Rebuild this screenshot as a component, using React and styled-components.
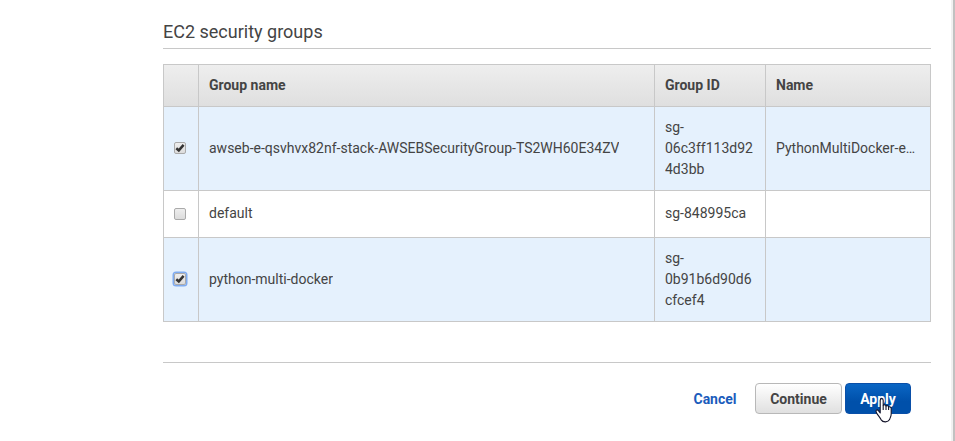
import React from "react";
import styled, { createGlobalStyle } from "styled-components";

const GlobalStyle = createGlobalStyle`
  *, *::before, *::after { box-sizing: border-box; }
  body {
    margin: 0;
    overflow: hidden;
    background: #fff;
    color: #444;
    font: 14px/21px Roboto, "Liberation Sans", sans-serif;
  }
`;

const Page = styled.div`
  display: flex;
  justify-content: space-between;
  height: 441px;
  padding-left: 163px;
`;

const Content = styled.main`
  width: 768px;
  padding-top: 20px;
`;

const ScrollEdge = styled.div`
  width: 4px;
  background: #c1c1c1;
  border-left: 2px solid #f1f1f1;
`;

const Title = styled.h2`
  height: 29px;
  margin: 0 0 15px;
  border-bottom: 1px solid #c8c8c8;
  font-size: 18px;
  font-weight: 400;
  line-height: 24px;
`;

const Table = styled.div`
  display: grid;
  grid-template-columns: 34px 455px 110px 164px;
  grid-template-rows: 41px 83px 46px 83px;
  gap: 1px;
  padding: 1px;
  background: #c8c8c8;
`;

const Row = styled.div`
  display: contents;
`;

const Cell = styled.div`
  display: flex;
  align-items: center;
  min-width: 0;
  padding: 0 10px ${(p) => (p.$selected ? 0 : 1)}px;
  background: ${(p) => (p.$selected ? "#e5f1fd" : "#fff")};
`;

const HeadCell = styled(Cell)`
  padding-bottom: 0;
  background: linear-gradient(#eee, #dfdfdf);
  font-weight: 700;
`;

const CheckCell = styled(Cell)`
  padding-bottom: ${(p) => (p.$selected ? 1 : 0)}px;
`;

const CellText = styled.span`
  min-width: 0;
  white-space: ${(p) => (p.$wrap ? "normal" : "nowrap")};
  word-break: ${(p) => (p.$wrap ? "break-word" : "normal")};
  overflow: hidden;
  text-overflow: ellipsis;
`;

const Checkbox = styled.span`
  display: flex;
  align-items: center;
  justify-content: center;
  flex: none;
  width: 12px;
  height: 12px;
  border: 1px solid #aaa;
  border-radius: 2px;
  background: linear-gradient(#eee, #dcdcdc);
  box-shadow: ${(p) => (p.$focused ? "0 0 0 1.5px #7fabf0" : "none")};
`;

const Footer = styled.footer`
  display: flex;
  justify-content: flex-end;
  margin-top: 40px;
  padding: 20px 20px 0 0;
  border-top: 1px solid #c8c8c8;
`;

const Button = styled.button`
  width: ${(p) => p.$width}px;
  height: 31px;
  margin: 0 0 0 3px;
  padding: 1px 0 0;
  border: 1px solid ${(p) => (p.$primary ? "#0a4fa8" : "#b8b8b8")};
  border-radius: 4px;
  background: ${(p) => (p.$primary ? "linear-gradient(#0a66c4, #0050aa 60%)" : "linear-gradient(#fff, #e0e0e0)")};
  color: ${(p) => (p.$primary ? "#fff" : "#444")};
  font: 700 14px/28px Roboto, "Liberation Sans", sans-serif;
`;

const CancelLink = styled(Button)`
  margin-right: 13px;
  border: 0;
  background: none;
  color: #1b5cbc;
  line-height: 30px;
`;

const Pointer = styled.svg`
  position: absolute;
  left: 874px;
  top: 397px;
`;

const rows = [
  { name: "awseb-e-qsvhvx82nf-stack-AWSEBSecurityGroup-TS2WH60E34ZV", id: "sg-06c3ff113d924d3bb", tag: "PythonMultiDocker-env", checked: true },
  { name: "default", id: "sg-848995ca", tag: "" },
  { name: "python-multi-docker", id: "sg-0b91b6d90d6cfcef4", tag: "", checked: true, focused: true },
];

function Check() {
  return (
    <svg width="10" height="10" viewBox="0 0 10 10" aria-hidden="true">
      <path d="M1.3 5.2 3.8 7.4 8.6 1.9" fill="none" stroke="#333" strokeWidth="2.5" />
    </svg>
  );
}

export default function App() {
  return (
    <>
      <GlobalStyle />
      <Page>
        <Content>
          <Title>EC2 security groups</Title>
          <Table>
            <Row>
              <HeadCell />
              <HeadCell>Group name</HeadCell>
              <HeadCell>Group ID</HeadCell>
              <HeadCell>Name</HeadCell>
            </Row>
            {rows.map((r) => (
              <Row key={r.id}>
                <CheckCell $selected={r.checked}>
                  <Checkbox $focused={r.focused}>{r.checked && <Check />}</Checkbox>
                </CheckCell>
                <Cell $selected={r.checked}><CellText>{r.name}</CellText></Cell>
                <Cell $selected={r.checked}><CellText $wrap>{r.id}</CellText></Cell>
                <Cell $selected={r.checked}><CellText>{r.tag}</CellText></Cell>
              </Row>
            ))}
          </Table>
          <Footer>
            <CancelLink $width={48}>Cancel</CancelLink>
            <Button $width={87}>Continue</Button>
            <Button $width={66} $primary>Apply</Button>
          </Footer>
        </Content>
        <ScrollEdge />
      </Page>
      <Pointer width="19" height="26" viewBox="0 0 19 26" aria-hidden="true">
        <path
          d="M6.2 16V3.4C6.2 1 9.2 1 9.2 3.4V8.6C9.8 7.4 12 7.6 12 9.2 12.8 8.3 14.6 8.6 14.6 10 15.6 9.4 17.2 10 17.2 11.5V17C17.2 20 15.6 21.5 15.6 22.6 14.2 25.4 9 25.8 7 22.6 6 20.4 4 18.5 2.6 16 1 13 3 12 4.4 13.6L6.2 16Z"
          fill="#fff" stroke="#14142a" strokeWidth="1.1" strokeLinejoin="round"
        />
        <path d="M9.2 8.5V13M12 9.2V13M14.6 10V13" stroke="#14142a" strokeWidth="1.1" />
      </Pointer>
    </>
  );
}
